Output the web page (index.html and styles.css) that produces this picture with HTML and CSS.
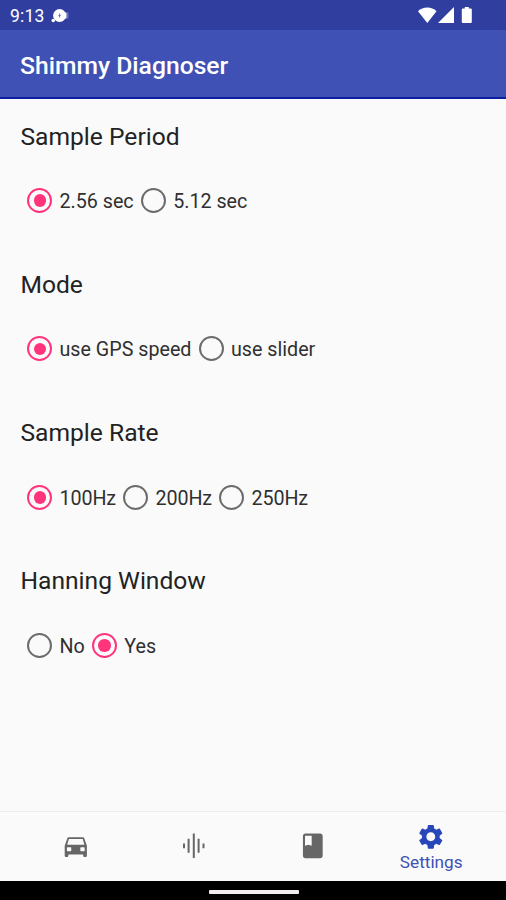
FILE: index.html
```html
<!DOCTYPE html>
<html lang="en">
<head>
<meta charset="utf-8">
<title>Shimmy Diagnoser</title>
<link rel="stylesheet" href="styles.css">
</head>
<body>
<div class="screen">
  <div class="status">
    <span class="clock">9:13</span>
    <svg class="notice" width="20" height="18" viewBox="0 0 20 18"><circle cx="9.600" cy="8.500" r="6.500" fill="#fff"/><circle cx="3.300" cy="13.500" r="1.800" fill="#fff"/><path d="M9.600 6.500v4M8.500 8.500h2.200" stroke="#6673bd" stroke-width="1"/><path d="M14 5.500h2.500v6H14z" fill="#fff"/><path d="M17.800 5.500v6" stroke="#8993cb" stroke-width="1"/></svg>
    <svg class="signals" width="58" height="20" viewBox="0 0 58 20" fill="#fff"><path d="M1 6.200C3.500 3.800 6.800 2.500 10.300 2.500S17 3.800 19.500 6.200L10.300 18z"/><path d="M21 18L37 2v16z"/><path d="M45.800 3.600h2V2h4v1.600h2q1 0 1 1V17q0 1-1 1h-8q-1 0-1-1V4.600q0-1 1-1z"/></svg>
  </div>
  <header class="appbar"><h1>Shimmy Diagnoser</h1></header>
  <main class="content">
    <section class="group">
      <h2>Sample Period</h2>
      <div class="options">
        <div class="option"><span class="radio on"></span><span>2.56 sec</span></div>
        <div class="option"><span class="radio"></span><span>5.12 sec</span></div>
      </div>
    </section>
    <section class="group">
      <h2>Mode</h2>
      <div class="options">
        <div class="option"><span class="radio on"></span><span>use GPS speed</span></div>
        <div class="option"><span class="radio"></span><span>use slider</span></div>
      </div>
    </section>
    <section class="group">
      <h2>Sample Rate</h2>
      <div class="options rates">
        <div class="option"><span class="radio on"></span><span>100Hz</span></div>
        <div class="option"><span class="radio"></span><span>200Hz</span></div>
        <div class="option"><span class="radio"></span><span>250Hz</span></div>
      </div>
    </section>
    <section class="group">
      <h2>Hanning Window</h2>
      <div class="options">
        <div class="option"><span class="radio"></span><span>No</span></div>
        <div class="option"><span class="radio on"></span><span>Yes</span></div>
      </div>
    </section>
  </main>
  <nav class="tabs">
    <div class="tab"><svg class="icon" viewBox="0 0 24 24"><path d="M18.920 6.010C18.720 5.420 18.160 5 17.500 5h-11c-.66 0-1.210.42-1.420 1.010L3 12v8c0 .55.45 1 1 1h1c.55 0 1-.45 1-1v-1h12v1c0 .55.45 1 1 1h1c.55 0 1-.45 1-1v-8l-2.080-5.990zM5.300 13.100h2.500q.5 0 .5.500v2.300q0 .5-.5.500H5.300q-.5 0-.5-.5v-2.300q0-.5.5-.5zM16.200 13.100h2.500q.5 0 .5.500v2.300q0 .5-.5.500h-2.500q-.5 0-.5-.5v-2.300q0-.5.5-.5zM5 11.200L6.400 6.400h11.200L19 11.200z" fill-rule="evenodd"/></svg></div>
    <div class="tab"><svg class="icon" viewBox="0 0 29.600 29.600"><path d="M4 12.400h2v4.800H4zM8.600 7.800h2v14h-2zM13.800 2.600h2v24.400h-2zM18.600 7.800h2v14h-2zM23.500 12.400h2v4.800h-2z"/></svg></div>
    <div class="tab"><svg class="icon" viewBox="0 0 24 24"><path d="M18 2H6c-1.100 0-2 .9-2 2v16c0 1.100.9 2 2 2h12c1.100 0 2-.9 2-2V4c0-1.100-.9-2-2-2zM5.700 3.800h5.400v8.200l-2.700-.9-2.700.9V3.800z" fill-rule="evenodd"/></svg></div>
    <div class="tab active"><svg class="icon" viewBox="0 0 24 24"><path d="M19.140 12.940c.04-.3.06-.61.06-.94 0-.32-.02-.64-.07-.94l2.030-1.580c.18-.14.23-.41.12-.61l-1.920-3.320c-.12-.22-.37-.29-.59-.22l-2.390.96c-.5-.38-1.030-.7-1.620-.94l-.36-2.540c-.04-.24-.24-.41-.48-.41h-3.840c-.24 0-.43.17-.47.41l-.36 2.540c-.59.24-1.130.57-1.620.94l-2.390-.96c-.22-.08-.47 0-.59.22L2.740 8.870c-.12.21-.08.47.12.61l2.030 1.580c-.05.3-.09.63-.09.94s.02.64.07.94l-2.030 1.580c-.18.14-.23.41-.12.61l1.920 3.320c.12.22.37.29.59.22l2.390-.96c.5.38 1.030.7 1.620.94l.36 2.540c.05.24.24.41.48.41h3.840c.24 0 .44-.17.47-.41l.36-2.540c.59-.24 1.130-.56 1.620-.94l2.390.96c.22.08.47 0 .59-.22l1.920-3.320c.12-.22.07-.47-.12-.61l-2.010-1.580zM12 15.600c-1.980 0-3.600-1.620-3.600-3.600s1.620-3.600 3.600-3.600 3.600 1.620 3.600 3.600-1.620 3.600-3.600 3.600z"/></svg><span>Settings</span></div>
  </nav>
  <div class="system"><div class="handle"></div></div>
</div>
</body>
</html>
```
FILE: styles.css
```css
body { margin: 0; font-family: Roboto, sans-serif; }
.screen { width: 506px; height: 900px; display: flex; flex-direction: column; background: #fafafa; overflow: hidden; }
.status { height: 30px; flex: none; box-sizing: border-box; background: #303f9f; color: #fff; display: flex; align-items: center; padding: 0 31px 0 10px; }
.clock { font-size: 17.5px; line-height: 30px; letter-spacing: .2px; width: 40px; padding-top: 2px; }
.notice { margin-top: 1px; }
.signals { margin-left: auto; }
.appbar { height: 69px; flex: none; box-sizing: border-box; background: #3f51b5; border-bottom: 2px solid #0d1fa0; padding-left: 20px; display: flex; align-items: center; }
h1 { margin: 5px 0 0; color: #fff; font-size: 24.700px; font-weight: 500; line-height: 30px; }
.content { flex: 1; padding: 21.500px 20px 0; }
.group { height: 148.300px; }
h2 { margin: 0; padding-left: .5px; font-size: 24.600px; line-height: 32px; font-weight: 400; color: #222; }
.options { display: flex; margin-top: 28.200px; height: 40px; }
.option { display: flex; align-items: center; font-size: 19.700px; line-height: 40px; color: #303030; }
.rates { letter-spacing: -.1px; }
.option span:last-child { padding-top: 2.600px; }
.radio { box-sizing: border-box; width: 25px; height: 25px; border: 2.400px solid #6c6c6c; border-radius: 50%; margin: 0 7.250px; display: flex; align-items: center; justify-content: center; }
.radio.on { border-color: #ff347c; }
.radio.on::before { content: ""; width: 12.500px; height: 12.500px; border-radius: 50%; background: #ff347c; }
.tabs { height: 70px; flex: none; box-sizing: border-box; border-top: 1px solid #eee; display: flex; justify-content: center; padding-left: 1px; }
.tab { width: 118.500px; box-sizing: border-box; padding-bottom: 1px; display: flex; flex-direction: column; align-items: center; justify-content: center; color: #3f51b5; font-size: 17.200px; line-height: 22px; }
.tab.active { padding: 2px 0 0; }
.icon { width: 29.600px; height: 29.600px; fill: #666; }
.active .icon { fill: #2746b8; }
.system { height: 19px; flex: none; background: #000; display: flex; align-items: center; justify-content: center; }
.handle { width: 90px; height: 4px; background: #f2eef0; border-radius: 1px; margin: 2px 0 0 1px; }
```
